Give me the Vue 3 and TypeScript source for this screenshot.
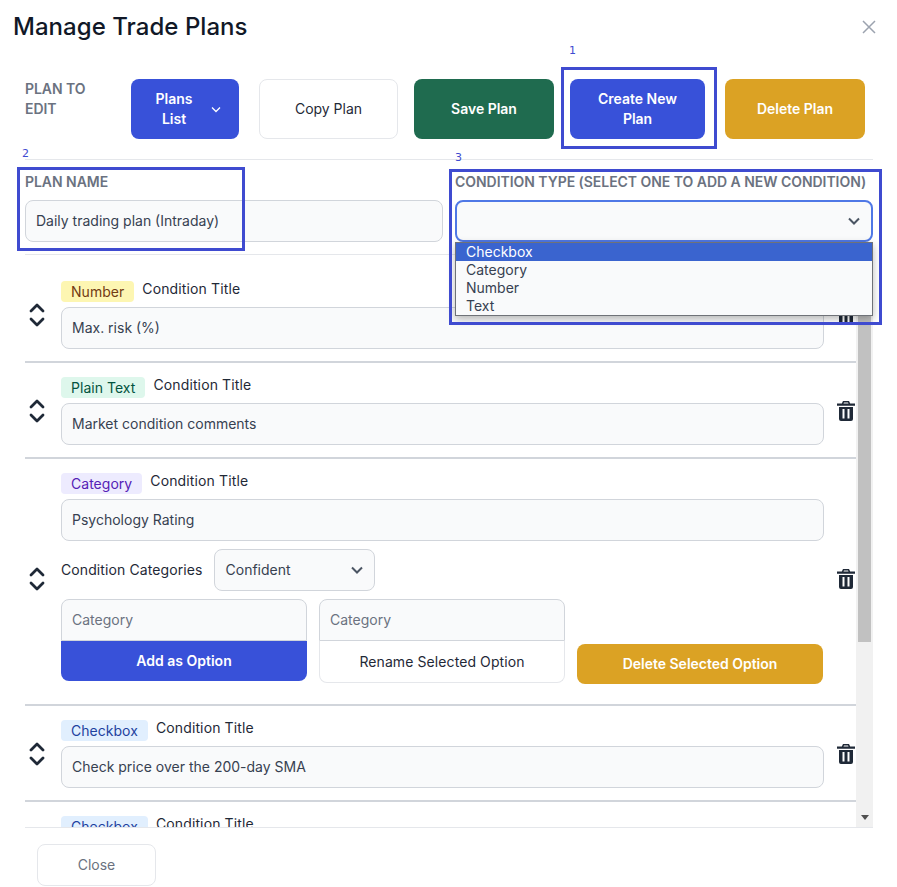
<script setup lang="ts">
interface Row {
  type: string
  tone: string
  value: string
  categories?: boolean
}
const rows: Row[] = [
  { type: 'Number', tone: 'yellow', value: 'Max. risk (%)' },
  { type: 'Plain Text', tone: 'green', value: 'Market condition comments' },
  { type: 'Category', tone: 'purple', value: 'Psychology Rating', categories: true },
  { type: 'Checkbox', tone: 'blue', value: 'Check price over the 200-day SMA' },
  { type: 'Checkbox', tone: 'blue', value: 'Check volume above average' },
]
const options = ['Checkbox', 'Category', 'Number', 'Text']
</script>

<template>
  <div class="modal">
    <header class="head">
      <h1>Manage Trade Plans</h1>
      <button class="x" aria-label="Close">
        <svg width="14" height="14" viewBox="0 0 14 14"><path d="M1 1l12 12M13 1L1 13" fill="none" stroke="#9ca3af" stroke-width="1.5" /></svg>
      </button>
    </header>

    <section class="actions">
      <div class="plan-label">PLAN TO EDIT</div>
      <button class="btn blue plans">
        <span class="plans-text">Plans List</span>
        <svg width="12" height="12" viewBox="0 0 12 12"><path d="M2 4.500l4 4 4-4" fill="none" stroke="#fff" stroke-width="1.300" /></svg>
      </button>
      <button class="btn ghost copy">Copy Plan</button>
      <button class="btn green save">Save Plan</button>
      <button class="btn blue create">Create New Plan</button>
      <button class="btn amber del">Delete Plan</button>
    </section>

    <section class="form">
      <div class="col">
        <label>PLAN NAME</label>
        <input class="field" value="Daily trading plan (Intraday)" />
      </div>
      <div class="col type">
        <label>CONDITION TYPE (SELECT ONE TO ADD A NEW CONDITION)</label>
        <div class="focus-select">
          <svg width="14" height="14" viewBox="0 0 14 14"><path d="M2 4.500l5 5 5-5" fill="none" stroke="#4b5563" stroke-width="2" /></svg>
        </div>
        <ul class="listbox">
          <li v-for="(o, i) in options" :key="o" :class="{ on: i === 0 }">{{ o }}</li>
        </ul>
      </div>
    </section>

    <section class="scroll">
      <div class="list">
        <article v-for="(r, i) in rows" :key="i" class="row">
          <div class="order">
            <svg width="16" height="24" viewBox="0 0 16 24">
              <path d="M2 8L8 2l6 6M2 16l6 6 6-6" fill="none" stroke="#1f2937" stroke-width="2.800" stroke-linecap="round" stroke-linejoin="round" />
            </svg>
          </div>
          <div class="fields">
            <div class="title-line">
              <span class="badge" :class="r.tone">{{ r.type }}</span>
              <span class="cond-title">Condition Title</span>
            </div>
            <input class="field" :value="r.value" />
            <template v-if="r.categories">
              <div class="cat-line">
                <span class="cat-label">Condition Categories</span>
                <div class="cat-select">
                  <span>Confident</span>
                  <svg width="14" height="14" viewBox="0 0 14 14"><path d="M2 4.500l5 5 5-5" fill="none" stroke="#4b5563" stroke-width="2" /></svg>
                </div>
              </div>
              <div class="opts">
                <div class="opt">
                  <input class="opt-in" placeholder="Category" />
                  <button class="opt-btn solid">Add as Option</button>
                </div>
                <div class="opt">
                  <input class="opt-in" placeholder="Category" />
                  <button class="opt-btn outline">Rename Selected Option</button>
                </div>
                <button class="btn amber opt-del">Delete Selected Option</button>
              </div>
            </template>
          </div>
          <div class="trash">
            <svg width="18" height="20" viewBox="0 0 18 20">
              <path fill="#1f2937" fill-rule="evenodd" d="M6 0h6l1.200 2.500H18v2.200H0V2.500h4.800zM7 1.400L6.500 2.500h5L11 1.400zM2 6h14v12a2 2 0 0 1-2 2H4a2 2 0 0 1-2-2zM5.500 8v9.500h2V8zM10.500 8v9.500h2V8z" />
            </svg>
          </div>
        </article>
      </div>
      <div class="bar">
        <div class="thumb"></div>
        <svg class="arrow" width="8" height="5" viewBox="0 0 8 5"><path d="M0 0h8L4 5z" fill="#505050" /></svg>
      </div>
    </section>

    <footer class="foot">
      <button class="close">Close</button>
    </footer>

    <div class="mark m1"></div>
    <div class="mark m2"></div>
    <div class="mark m3"></div>
    <span class="num n1">1</span>
    <span class="num n2">2</span>
    <span class="num n3">3</span>
  </div>
</template>

<style>
html, body { margin: 0; background: #fff; }
</style>

<style scoped>
* { box-sizing: border-box; }
.modal {
  position: relative;
  width: 897px;
  height: 887px;
  display: flex;
  flex-direction: column;
  padding-left: 25px;
  padding-right: 24px;
  background: #fff;
  overflow: hidden;
  font: 400 14px/20px Inter, sans-serif;
  color: #111827;
}
button { font: inherit; cursor: pointer; }
.head {
  height: 79px;
  flex: none;
  margin-left: -12px;
  margin-right: -3px;
  display: flex;
  justify-content: space-between;
  align-items: flex-start;
}
h1 {
  margin: 11px 0 0;
  font-size: 24px;
  line-height: 32px;
  font-weight: 500;
  letter-spacing: 0.04px;
  color: #111827;
}
.x {
  margin-top: 20px;
  width: 14px;
  height: 14px;
  padding: 0;
  border: 0;
  background: none;
  display: flex;
}
.actions {
  flex: none;
  display: flex;
  height: 81px;
  padding-bottom: 20px;
  border-bottom: 1px solid #e5e7eb;
}
.plan-label {
  width: 106px;
  padding-right: 30px;
  font-weight: 600;
  letter-spacing: -0.04px;
  color: #6b7280;
}
.btn {
  height: 60px;
  border: 0;
  border-radius: 8px;
  padding: 0 16px;
  color: #fff;
  font-weight: 600;
  letter-spacing: -0.02px;
  text-align: center;
}
.blue { background: #3851d9; }
.green { background: #1f6b4f; }
.amber { background: #dba224; }
.ghost { background: #fff; color: #1f2937; font-weight: 400; border: 1px solid #e5e7eb; }
.plans {
  width: 108px;
  padding: 0 17px 0 20px;
  display: flex;
  align-items: center;
  justify-content: space-between;
}
.plans-text { width: 46px; }
.copy { width: 139px; margin-left: 20px; }
.save { width: 140px; margin-left: 16px; }
.create { width: 135px; margin-left: 16px; padding: 0 20px; }
.del { width: 140px; margin-left: 20px; }
.form {
  flex: none;
  height: 95px;
  padding-top: 12px;
  display: grid;
  grid-template-columns: 418px 418px;
  column-gap: 12px;
  border-bottom: 1px solid #e5e7eb;
}
.col { position: relative; }
.col label {
  display: block;
  height: 28px;
  font-weight: 600;
  letter-spacing: -0.04px;
  color: #6b7280;
  white-space: nowrap;
}
.field {
  display: block;
  width: 100%;
  height: 42px;
  padding: 0 10px 2px;
  border: 1px solid #d1d5db;
  border-radius: 8px;
  background: #f9fafb;
  font: inherit;
  color: #374151;
  outline: none;
}
.focus-select {
  height: 42px;
  border: 2px solid #4f78e6;
  border-radius: 8px;
  background: #f9fafb;
  display: flex;
  align-items: center;
  justify-content: flex-end;
  padding-right: 10px;
}
.listbox {
  position: absolute;
  left: 0;
  right: 0;
  top: 70px;
  z-index: 3;
  margin: 0;
  padding: 0;
  list-style: none;
  height: 74px;
  background: #f9fafb;
  border: 1px solid #6f7278;
  box-shadow: 0 3px 8px rgba(0, 0, 0, 0.28);
  color: #374151;
  line-height: 18px;
}
.listbox li { height: 18px; padding-left: 10px; }
.listbox li.on { background: #3a64cf; color: #fff; }
.scroll {
  flex: 1;
  min-height: 0;
  display: flex;
  overflow: hidden;
  border-bottom: 1px solid #e5e7eb;
}
.list {
  flex: 1;
  min-width: 0;
  padding-top: 12px;
  overflow: hidden;
}
.row {
  display: flex;
  align-items: center;
  padding: 14px 0 12px;
  border-bottom: 2px solid #d1d5db;
}
.row:has(.opts) { padding-bottom: 20px; }
.order {
  width: 36px;
  flex: none;
  padding-right: 12px;
  display: flex;
  justify-content: center;
}
.fields { width: 763px; flex: none; }
.title-line {
  display: flex;
  align-items: flex-start;
  gap: 8px;
  height: 26px;
}
.badge {
  height: 21px;
  padding: 0 10px;
  border-radius: 4px;
  line-height: 22px;
  letter-spacing: 0.03px;
}
.badge.yellow { background: #fdf6b2; color: #723b13; }
.badge.green { background: #def7ec; color: #03543f; }
.badge.purple { background: #edebfe; color: #5521b5; }
.badge.blue { background: #e1effe; color: #1e429f; }
.cond-title { line-height: 15px; letter-spacing: 0.13px; color: #1f2937; }
.cat-line {
  margin-top: 8px;
  display: flex;
  align-items: center;
  gap: 11px;
}
.cat-label { letter-spacing: 0.1px; color: #1f2937; }
.cat-select {
  width: 161px;
  height: 42px;
  padding: 0 10px 0 11px;
  border: 1px solid #d1d5db;
  border-radius: 8px;
  background: #f9fafb;
  color: #374151;
  display: flex;
  align-items: center;
  justify-content: space-between;
}
.opts {
  margin-top: 8px;
  display: grid;
  grid-template-columns: 246px 246px 246px;
  column-gap: 12px;
  align-items: start;
  height: 85px;
}
.opt-in {
  display: block;
  width: 100%;
  height: 42px;
  padding: 0 10px 2px;
  border: 1px solid #d1d5db;
  border-radius: 8px 8px 0 0;
  background: #f9fafb;
  font: inherit;
  outline: none;
}
.opt-in::placeholder { color: #6b7280; opacity: 1; }
.opt-btn {
  display: block;
  width: 100%;
  border-radius: 0 0 8px 8px;
}
.opt-btn.solid {
  height: 40px;
  border: 0;
  background: #3851d9;
  color: #fff;
  font-weight: 600;
}
.opt-btn.outline {
  height: 42px;
  border: 1px solid #e5e7eb;
  border-top: 0;
  background: #fff;
  color: #1f2937;
  letter-spacing: 0.09px;
}
.opt-del { height: 40px; margin-top: 45px; }
.trash {
  width: 32px;
  flex: none;
  display: flex;
  justify-content: flex-end;
  padding-right: 1px;
}
.bar {
  position: relative;
  width: 17px;
  flex: none;
  background: #f1f1f1;
}
.thumb {
  position: absolute;
  left: 2px;
  right: 2px;
  top: 20px;
  height: 367px;
  background: #c1c1c1;
}
.arrow { position: absolute; left: 5px; bottom: 7px; }
.foot {
  flex: none;
  height: 59px;
  padding: 16px 0 0 12px;
}
.close {
  width: 119px;
  height: 42px;
  background: #fff;
  border: 1px solid #e5e7eb;
  border-radius: 8px;
  color: #6b7280;
}
.mark {
  position: absolute;
  z-index: 4;
  border: 3px solid #3f4bd0;
  pointer-events: none;
}
.m1 { left: 561px; top: 67px; width: 156px; height: 82px; }
.m2 { left: 17px; top: 167px; width: 228px; height: 84px; }
.m3 { left: 449px; top: 169px; width: 433px; height: 156px; }
.num {
  position: absolute;
  z-index: 4;
  font: 400 11px/14px "DejaVu Sans", sans-serif;
  color: #3f4bd0;
}
.n1 { left: 569px; top: 44px; }
.n2 { left: 22px; top: 147px; }
.n3 { left: 455px; top: 151px; }
</style>
